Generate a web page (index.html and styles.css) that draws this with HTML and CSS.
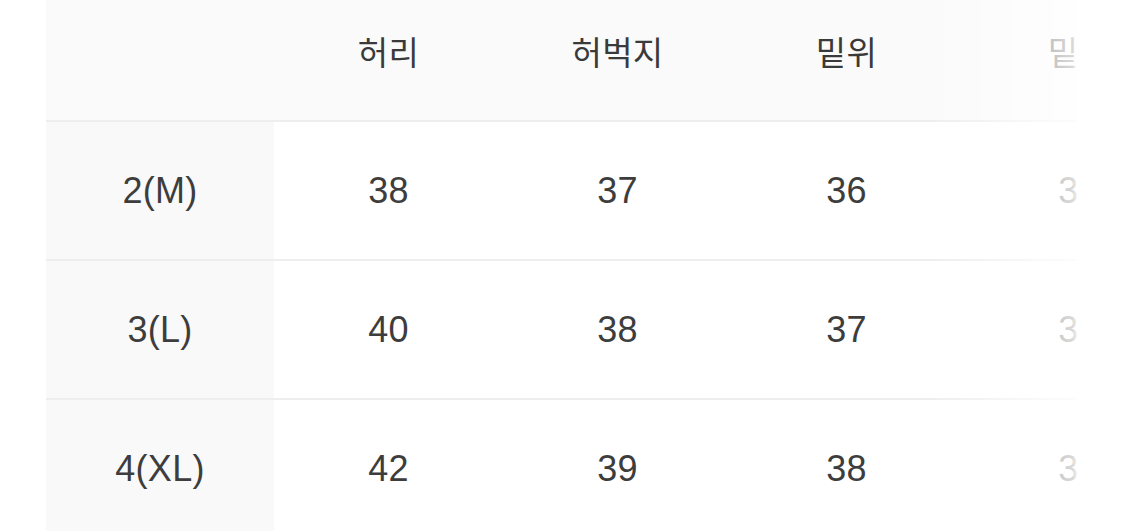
FILE: index.html
```html
<!DOCTYPE html>
<html lang="ko">
<head>
<meta charset="utf-8">
<title>사이즈</title>
<link rel="stylesheet" href="styles.css">
</head>
<body>
<div class="viewport">
  <div class="table">
    <div class="row head">
      <div class="cell label"></div>
      <div class="cell">허리</div>
      <div class="cell">허벅지</div>
      <div class="cell">밑위</div>
      <div class="cell">밑단</div>
    </div>
    <div class="row">
      <div class="cell label">2(M)</div>
      <div class="cell">38</div>
      <div class="cell">37</div>
      <div class="cell">36</div>
      <div class="cell">30</div>
    </div>
    <div class="row">
      <div class="cell label">3(L)</div>
      <div class="cell">40</div>
      <div class="cell">38</div>
      <div class="cell">37</div>
      <div class="cell">31</div>
    </div>
    <div class="row">
      <div class="cell label">4(XL)</div>
      <div class="cell">42</div>
      <div class="cell">39</div>
      <div class="cell">38</div>
      <div class="cell">32</div>
    </div>
  </div>
  <div class="fade"></div>
</div>
</body>
</html>
```
FILE: styles.css
```css
html, body {
  margin: 0;
  padding: 0;
  background: #ffffff;
}
body {
  padding-left: 46px;
  font-family: "Liberation Sans", "Noto Sans CJK KR", sans-serif;
  color: #3d3d3d;
  overflow: hidden;
  height: 531px;
}
.viewport {
  position: relative;
  width: 1034px;
  overflow: hidden;
}
.table {
  display: flex;
  flex-direction: column;
  width: 1150px;
}
.row {
  display: grid;
  grid-template-columns: 228px 229px 229px 229px 235px;
  height: 137px;
  border-top: 2px solid #eeeeee;
}
.row.head {
  height: 120px;
  border-top: none;
  background: #fafafa;
}
.cell {
  display: flex;
  align-items: center;
  justify-content: center;
  font-size: 36px;
  letter-spacing: 0.3px;
}
.head .cell {
  font-family: "Noto Sans CJK KR", sans-serif;
  font-size: 33px;
  padding-bottom: 18px;
  color: #3a3a3a;
}
.cell.label {
  background: #f9f9f9;
}
.head .cell.label {
  background: transparent;
}
.fade {
  position: absolute;
  top: 0;
  right: 0;
  bottom: 0;
  width: 150px;
  background: linear-gradient(to right, rgba(255,255,255,0) 0%, rgba(255,255,255,0.55) 60%, rgba(255,255,255,0.8) 95%, rgba(255,255,255,1) 100%);
  pointer-events: none;
}
```
